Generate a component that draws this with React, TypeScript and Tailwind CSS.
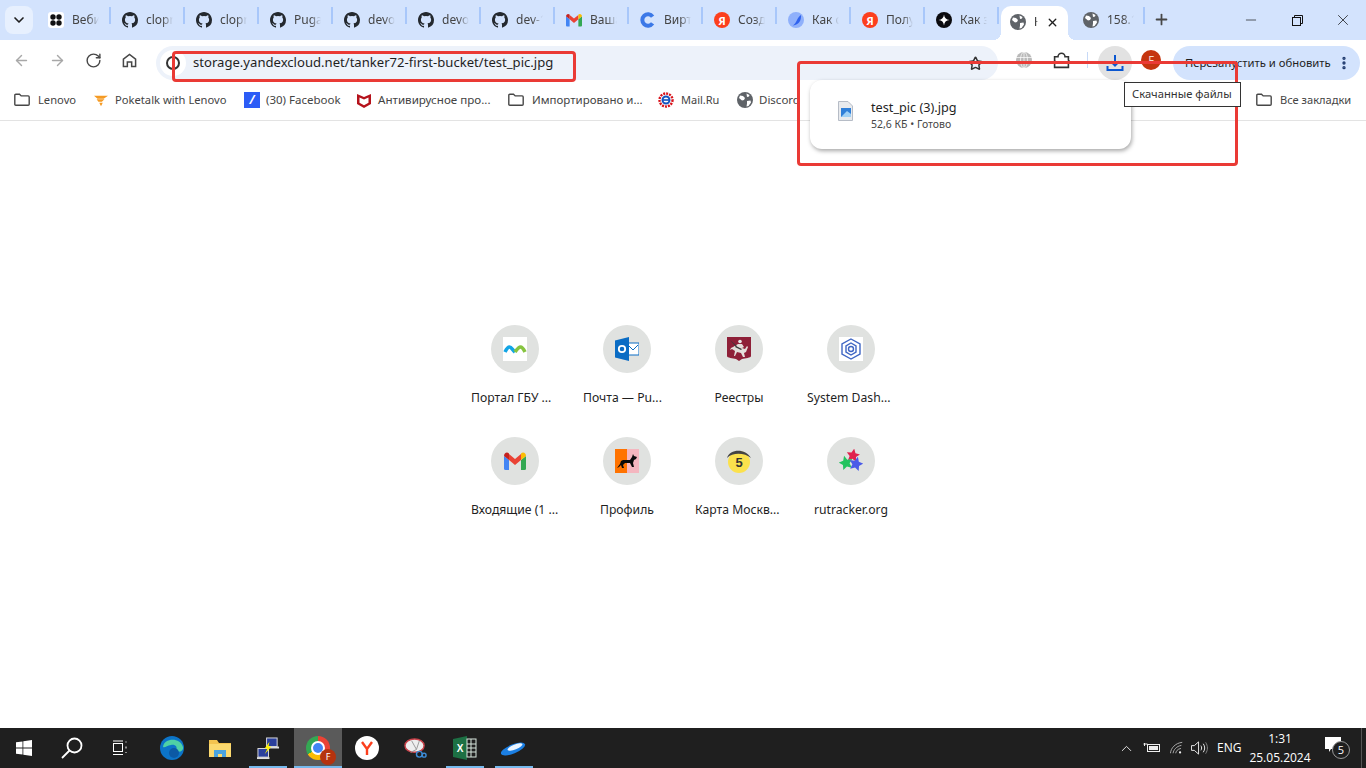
import React from 'react';
import {
  ArrowLeft, ArrowRight, RotateCw, Star, Plus, X, Minus, ChevronDown, ChevronUp, MoreVertical,
} from 'lucide-react';

const starPoints = (cx: number, cy: number, R: number, r: number, rot: number) =>
  Array.from({ length: 10 }, (_, i) => {
    const a = ((rot + i * 36 - 90) * Math.PI) / 180;
    const d = i % 2 === 0 ? R : r;
    return `${(cx + d * Math.cos(a)).toFixed(2)},${(cy + d * Math.sin(a)).toFixed(2)}`;
  }).join(' ');

const Github = () => (
  <svg viewBox="0 0 16 16" className="w-4 h-4 shrink-0" fill="#24292f">
    <path d="M8 0C3.58 0 0 3.58 0 8c0 3.54 2.29 6.53 5.47 7.59.4.07.55-.17.55-.38v-1.34c-2.23.48-2.69-1.07-2.69-1.07-.36-.93-.89-1.17-.89-1.17-.73-.5.05-.49.05-.49.8.06 1.23.82 1.23.82.71 1.22 1.87.87 2.33.66.07-.52.28-.87.51-1.07-1.78-.2-3.64-.89-3.64-3.95 0-.87.31-1.59.82-2.15-.08-.2-.36-1.02.08-2.12 0 0 .67-.21 2.2.82a7.6 7.6 0 0 1 4 0c1.53-1.04 2.2-.82 2.2-.82.44 1.1.16 1.92.08 2.12.51.56.82 1.27.82 2.15 0 3.07-1.87 3.75-3.65 3.95.29.25.54.73.54 1.48v2.2c0 .21.15.46.55.38A8 8 0 0 0 16 8c0-4.42-3.58-8-8-8z" />
  </svg>
);

const Globe = ({ color = '#5f6368' }: { color?: string }) => (
  <svg viewBox="0 0 16 16" className="w-4 h-4 shrink-0">
    <circle cx="8" cy="8" r="8" fill={color} />
    <path d="M3 3.5l3 .5 2 2-1 2-2 .5-3-2.5zM10 9l3.5-.5.5 2-2.5 3.5-2 .5.5-3zM9.5 1.5l3 1.5-.5 1.5-2 .5z" fill="#fff" />
  </svg>
);

const Dots = () => (
  <svg viewBox="0 0 16 16" className="w-4 h-4 shrink-0">
    <rect width="16" height="16" rx="3" fill="#fff" />
    <circle cx="5" cy="5" r="2.7" fill="#111" />
    <circle cx="11" cy="5" r="2.7" fill="#111" />
    <circle cx="5" cy="11" r="2.7" fill="#111" />
    <circle cx="11" cy="11" r="2.7" fill="#111" />
  </svg>
);

const Gmail = ({ size = 'w-4 h-4' }: { size?: string }) => (
  <svg viewBox="0 0 22 18" className={`${size} shrink-0`}>
    <path d="M0 4v12.5A1.5 1.5 0 0 0 1.5 18H5V8z" fill="#4285f4" />
    <path d="M22 4v12.5a1.5 1.5 0 0 1-1.5 1.5H17V8z" fill="#34a853" />
    <path d="M5 8V2L11 7l6-5v6l-6 5z" fill="#ea4335" />
    <path d="M0 4c0-3 3-4.5 5-2.5V8z" fill="#c5221f" />
    <path d="M22 4c0-3-3-4.5-5-2.5V8z" fill="#fbbc04" />
  </svg>
);

const Cloud = () => (
  <svg viewBox="0 0 16 16" className="w-4 h-4 shrink-0" fill="none" stroke="#3b78e7" strokeWidth="4">
    <path d="M12.6 4.6A5.7 5.7 0 1 0 12.6 11.4" />
  </svg>
);

const Yandex = () => (
  <div className="w-4 h-4 shrink-0 rounded-full bg-[#fc3f1d] flex items-center justify-center text-white text-[11px] font-bold leading-none">
    Я
  </div>
);

const Comet = () => (
  <svg viewBox="0 0 16 16" className="w-4 h-4 shrink-0">
    <circle cx="8" cy="8" r="8" fill="#8fb0fb" />
    <path d="M13 3c.5 5-2 10-8 10.5C7 12 8 10 9 8c1-2 2-4 4-5z" fill="#2f62ee" />
  </svg>
);

const Spark = () => (
  <svg viewBox="0 0 16 16" className="w-4 h-4 shrink-0">
    <circle cx="8" cy="8" r="8" fill="#0b0b0f" />
    <path d="M8 2.5c.4 3.4 2 5.1 5.5 5.5-3.5.4-5.1 2.1-5.5 5.5-.4-3.4-2-5.1-5.5-5.5 3.5-.4 5.1-2.1 5.5-5.5z" fill="#fff" />
  </svg>
);

const FolderIcon = () => (
  <svg viewBox="0 0 16 16" className="w-4 h-4 shrink-0" fill="none" stroke="#474747" strokeWidth="1.4">
    <path d="M.8 3.2c0-.6.4-1 1-1h3.7l1.7 1.7h7c.6 0 1 .4 1 1v7.3c0 .6-.4 1-1 1H1.8c-.6 0-1-.4-1-1z" />
  </svg>
);

const Tab = ({ icon, title }: { icon: React.ReactNode; title: string }) => (
  <div className="relative w-[74px] h-[32px] shrink-0 flex items-center pl-[11px] gap-[8px] border-r-2 border-[#a8c7fa] [border-image:linear-gradient(#d3e3fd_4px,#a8c7fa_4px,#a8c7fa_20px,#d3e3fd_20px)_1]">
    {icon}
    <span className="w-[27px] overflow-hidden whitespace-nowrap text-[12px] text-[#444] [mask-image:linear-gradient(90deg,#000_60%,transparent)]">
      {title}
    </span>
  </div>
);

const tabs: { icon: React.ReactNode; title: string }[] = [
  { icon: <Dots />, title: 'Веби' },
  { icon: <Github />, title: 'clopro' },
  { icon: <Github />, title: 'clopro' },
  { icon: <Github />, title: 'Pugach' },
  { icon: <Github />, title: 'devops' },
  { icon: <Github />, title: 'devops' },
  { icon: <Github />, title: 'dev-1' },
  { icon: <Gmail />, title: 'Ваша' },
  { icon: <Cloud />, title: 'Вирту' },
  { icon: <Yandex />, title: 'Созда' },
  { icon: <Comet />, title: 'Как с' },
  { icon: <Yandex />, title: 'Полу' },
  { icon: <Spark />, title: 'Как з' },
];

const Bookmark = ({ icon, label, width, gap, size }: { icon: React.ReactNode; label: string; width: string; gap: string; size: string }) => (
  <div className={`flex items-center shrink-0 ${gap}`}>
    {icon}
    <span className={`${width} ${size} whitespace-nowrap text-[#444]`}>{label}</span>
  </div>
);

const Tile = ({ icon, label }: { icon: React.ReactNode; label: string }) => (
  <div className="w-[112px] h-[112px] flex flex-col items-center">
    <div className="w-[48px] h-[48px] rounded-full bg-[#e0e2e0] flex items-center justify-center">
      <div className="w-6 h-6 flex items-center justify-center overflow-hidden">{icon}</div>
    </div>
    <span className={`mt-[16px] w-[88px] whitespace-nowrap text-[12.2px] leading-[17px] text-[#1f1f1f] ${label.endsWith('...') ? 'text-left' : 'text-center'}`}>
      {label}
    </span>
  </div>
);

const tiles: { icon: React.ReactNode; label: string }[] = [
  {
    label: 'Портал ГБУ ...',
    icon: (
      <svg viewBox="0 0 24 24" className="w-6 h-6">
        <rect width="24" height="24" fill="#fff" />
        <path d="M2 15c1.500-3 2.500-5 4.500-5s3 3 5.500 5" fill="none" stroke="#12a5e5" strokeWidth="3.6" />
        <path d="M12 15c1.500-2 3.500-5 5.500-5s3 2 4.500 5" fill="none" stroke="#86c440" strokeWidth="3.6" />
      </svg>
    ),
  },
  {
    label: 'Почта — Pu...',
    icon: (
      <svg viewBox="0 0 24 24" className="w-6 h-6">
        <rect x="11" y="6" width="13" height="12" fill="#fff" stroke="#0a6cc4" />
        <path d="M13 8l5 5 5-5" fill="none" stroke="#0a6cc4" />
        <path d="M0 3.5L14 0v24L0 20.5z" fill="#0a6cc4" />
        <circle cx="7" cy="12" r="3.2" fill="none" stroke="#fff" strokeWidth="1.8" />
      </svg>
    ),
  },
  {
    label: 'Реестры',
    icon: (
      <svg viewBox="0 0 24 24" className="w-6 h-6">
        <path d="M0 0h24v19c0 2-6 2-9 3l-3 2-3-2c-3-1-9-1-9-3z" fill="#8e2038" />
        <circle cx="13" cy="4.500" r="1.800" fill="#e8e8e8" />
        <path d="M6 10l5-3h4l2 3-2 1 3 1 2-3 1 1-2 5-2 1 1 4h-2l-2-4-4-1-2 4H7l1-5-3-2-2 1 1-2z" fill="#e4dfdb" />
        <path d="M9 9l6 3-1 1-6-3zM3 3l7 6-1 1z" fill="#3b3b3b" />
      </svg>
    ),
  },
  {
    label: 'System Dash...',
    icon: (
      <svg viewBox="0 0 24 24" className="w-6 h-6" fill="none" stroke="#3f66c4">
        <rect width="24" height="24" fill="#fff" stroke="none" />
        <path d="M12 2l9 5v10l-9 5-9-5V7z" strokeWidth="1.4" />
        <path d="M12 6l5 3v6l-5 3-5-3V9z" strokeWidth="1.4" />
        <circle cx="12" cy="12" r="2.5" strokeWidth="1.4" />
      </svg>
    ),
  },
  { label: 'Входящие (1 ...', icon: <Gmail size="w-[22px] h-[18px]" /> },
  {
    label: 'Профиль',
    icon: (
      <svg viewBox="0 0 24 24" className="w-6 h-6">
        <rect width="12" height="24" fill="#ff7300" />
        <rect x="12" width="12" height="24" fill="#f4b6bf" />
        <path d="M2 19l3-4 1-3 2-1h7l2-3 1-3 1 2 3 1-1 2-2 1-1 3 1 4h-2l-2-4h-5l-2 2 1 3H7l-1-3-2 2z" fill="#0a0a0a" />
      </svg>
    ),
  },
  {
    label: 'Карта Москв...',
    icon: (
      <svg viewBox="0 0 24 24" className="w-6 h-6">
        <circle cx="12" cy="13" r="11" fill="#fbe14c" />
        <path d="M0 9C3 0 18-1 24 9 18 4 6 3 0 9z" fill="#444" />
        <text x="12" y="18" textAnchor="middle" fontSize="13" fontWeight="700" fontFamily="'Liberation Sans', sans-serif" fill="#333">5</text>
      </svg>
    ),
  },
  {
    label: 'rutracker.org',
    icon: (
      <svg viewBox="0 0 24 24" className="w-6 h-6">
        <polygon points={starPoints(14, 6.5, 7, 3.4, 10)} fill="#e0234e" />
        <polygon points={starPoints(7, 14, 7.5, 3.6, -15)} fill="#22c35e" />
        <polygon points={starPoints(17, 15, 7.5, 3.6, 15)} fill="#4a5be8" />
      </svg>
    ),
  },
];

const TaskIcon = ({ children, active, open, className = '' }: { children: React.ReactNode; active?: boolean; open?: boolean; className?: string }) => (
  <div className={`relative w-[48px] h-[40px] shrink-0 flex items-center justify-center ${active ? 'bg-[#5a5a5a]' : ''} ${className}`}>
    {children}
    {open && <div className={`absolute bottom-0 h-[2px] bg-[#76b9ed] ${active ? 'left-0 right-0' : 'left-[5px] right-[5px]'}`} />}
  </div>
);

export default function App() {
  return (
    <div className="relative w-[1366px] h-[768px] overflow-hidden flex flex-col bg-white font-['Noto_Sans','Open_Sans',sans-serif]">
      {/* tab strip */}
      <div className="h-[40px] bg-[#d3e3fd] flex items-end shrink-0">
        <div className="w-[37px] h-[40px] shrink-0 flex items-center justify-center">
          <div className="w-7 h-7 mt-[-1px] rounded-lg bg-[#e7f0fe] flex items-center justify-center">
            <ChevronDown size={16} strokeWidth={2.5} color="#1f1f1f" />
          </div>
        </div>
        <div className="flex h-[40px] items-start pt-[4px]">
          {tabs.map((t, i) => (
            <Tab key={i} icon={t.icon} title={t.title} />
          ))}
        </div>
        <div className="relative ml-[2px] w-[67px] h-[34px] shrink-0 bg-white rounded-t-[10px] flex items-center pl-[9px] gap-[8px] pb-[2px]">
          <div className="absolute right-full bottom-0 w-[8px] h-[8px] bg-[radial-gradient(circle_at_0_0,transparent_8px,#fff_8px)]" />
          <div className="absolute left-full bottom-0 w-[8px] h-[8px] bg-[radial-gradient(circle_at_100%_0,transparent_8px,#fff_8px)]" />
          <Globe />
          <span className="w-[4px] overflow-hidden text-[12px] text-[#1f1f1f] [mask-image:linear-gradient(90deg,#000_40%,transparent)]">Н</span>
          <X size={13} strokeWidth={2.5} color="#1f1f1f" />
        </div>
        <div className="flex h-[40px] items-start pt-[4px]">
          <div className="w-[77px] h-[32px] shrink-0 flex items-center pl-[15px] gap-[8px] border-r-2 border-[#a8c7fa] [border-image:linear-gradient(#d3e3fd_4px,#a8c7fa_4px,#a8c7fa_20px,#d3e3fd_20px)_1]">
            <Globe />
            <span className="w-[27px] overflow-hidden whitespace-nowrap text-[12px] text-[#444] [mask-image:linear-gradient(90deg,#000_60%,transparent)]">158.160</span>
          </div>
          <Plus size={17} strokeWidth={2.5} color="#474747" className="ml-[8px] mt-[7px]" />
        </div>
        <div className="ml-auto flex h-[40px]">
          <div className="w-[46px] flex items-center justify-center"><Minus size={16} strokeWidth={1} color="#111" /></div>
          <div className="w-[46px] flex items-center justify-center">
            <svg viewBox="0 0 11 11" className="w-[11px] h-[11px]" fill="none" stroke="#111">
              <rect x=".5" y="2.5" width="8" height="8" />
              <path d="M2.5 2.5V.5h8v8h-2" />
            </svg>
          </div>
          <div className="w-[46px] flex items-center justify-center"><X size={18} strokeWidth={1} color="#111" /></div>
        </div>
      </div>

      {/* toolbar */}
      <div className="relative z-10 h-[40px] bg-white rounded-t-[8px] shrink-0 flex items-center pl-[13px]">
        <ArrowLeft size={17} color="#a8a8a8" strokeWidth={2} />
        <ArrowRight size={17} color="#a8a8a8" strokeWidth={2} className="ml-[19px]" />
        <RotateCw size={17} color="#474747" strokeWidth={2} className="ml-[19px]" />
        <svg viewBox="0 0 16 16" className="w-[15px] h-[15px] ml-[20px]" fill="none" stroke="#474747" strokeWidth="1.6">
          <path d="M1.5 14.5V6.5L8 1.5l6.5 5v8h-4.200V9.500H5.700v5z" />
        </svg>
        <div className="ml-[19px] w-[842px] h-[34px] mt-[6px] rounded-full bg-[#edf2fa] flex items-center pl-[4px]">
          <div className="w-[26px] h-[26px] rounded-full bg-white flex items-center justify-center">
            <div className="w-[14px] h-[14px] rounded-full border-2 border-[#333]" />
          </div>
          <span className="ml-[7px] text-[13.1px] text-[#1f1f1f] whitespace-nowrap">storage.yandexcloud.net/tanker72-first-bucket/test_pic.jpg</span>
          <Star size={15} strokeWidth={2.4} color="#333" className="ml-auto mr-[15px]" />
        </div>
        <svg viewBox="0 0 16 16" className="w-[16px] h-[16px] ml-[18px] mt-[-1px]" fill="#b9b9b9" stroke="#fff" strokeWidth=".7">
          <circle cx="8" cy="8" r="8" stroke="none" />
          <ellipse cx="8" cy="8" rx="3.5" ry="8" fill="none" />
          <path d="M0 5.5h16M0 10.5h16M8 0v16" />
        </svg>
        <svg viewBox="0 0 16 16" className="w-[17px] h-[17px] ml-[21px]" fill="none" stroke="#333" strokeWidth="1.5">
          <path d="M1.5 4.5h3.200a3.300 3.300 0 0 1 6.600 0h3.200v3.200a2.300 2.300 0 0 1 0 3.600v3.200H1.500v-3.400a2 2 0 0 0 0-3z" />
        </svg>
        <div className="ml-[17px] w-px h-[16px] bg-[#c7d9f7]" />
        <div className="ml-[10px] w-[34px] h-[34px] mt-[6px] rounded-full bg-[#e2e2e2] flex items-center justify-center">
          <svg viewBox="0 0 18 18" className="w-[18px] h-[18px]" fill="none" stroke="#0b57d0" strokeWidth="2">
            <path d="M9 1v10M5 7.5L9 11.5l4-4" />
            <path d="M1.5 12v4h15v-4" />
          </svg>
        </div>
        <div className="ml-[9px] w-5 h-5 rounded-full bg-[#c5350f] flex items-center justify-center text-[11px] text-[#f5d9cf]">F</div>
        <div className="ml-[12px] w-[187px] h-[34px] mt-[6px] rounded-full bg-[#d3e3fd] flex items-center pl-[12px]">
          <span className="w-[146px] text-[11.3px] text-[#1f1f1f] whitespace-nowrap">Перезапустить и обновить</span>
          <MoreVertical size={16} strokeWidth={3} color="#1f3a6e" className="ml-[5px]" />
        </div>
      </div>

      {/* bookmarks */}
      <div className="h-[41px] bg-white border-b border-[#e3e3e3] shrink-0 flex items-center pl-[14px] gap-[17px]">
        <Bookmark gap="gap-[8px]" width="w-[39px]" size="text-[11.2px]" icon={<FolderIcon />} label="Lenovo" />
        <Bookmark
          gap="gap-[7px]"
          width="w-[112px]"
          size="text-[11.2px]"
          label="Poketalk with Lenovo"
          icon={
            <svg viewBox="0 0 16 16" className="w-[14px] h-[14px]" fill="#f59a23">
              <path d="M0 3h16l-5 3.5H4zM3 7h9l-3 3H5zM6 11h4l-2 4z" />
            </svg>
          }
        />
        <Bookmark
          gap="gap-[6px]"
          width="w-[73px]"
          size="text-[11.5px]"
          label="(30) Facebook"
          icon={
            <div className="w-4 h-4 bg-[#2c5cf6] flex items-center justify-center text-white text-[12px] italic font-bold leading-none">/</div>
          }
        />
        <Bookmark
          gap="gap-[6px]"
          width="w-[113px]"
          size="text-[11.6px]"
          label="Антивирусное про..."
          icon={
            <svg viewBox="0 0 16 16" className="w-4 h-4" fill="#b5121b">
              <path d="M1 2l7 3 7-3v10l-7 4-7-4zM3.5 5.5v5.300L8 13.300l4.500-2.500V5.500L8 7.500z" />
            </svg>
          }
        />
        <Bookmark gap="gap-[8px]" width="w-[109px]" size="text-[11.5px]" icon={<FolderIcon />} label="Импортировано и..." />
        <Bookmark
          gap="gap-[7px]"
          width="w-[39px]"
          size="text-[11px]"
          label="Mail.Ru"
          icon={
            <svg viewBox="0 0 16 16" className="w-4 h-4">
              <circle cx="8" cy="8" r="6.5" fill="none" stroke="#d8131b" strokeWidth="2.4" strokeDasharray="2 1" />
              <circle cx="8" cy="8" r="3.5" fill="none" stroke="#1554c0" strokeWidth="2" />
              <rect x="4" y="7.2" width="8" height="1.6" fill="#1554c0" />
            </svg>
          }
        />
        <Bookmark gap="gap-[6px]" width="w-[40px]" size="text-[11.5px]" icon={<Globe />} label="Discord" />
        <div className="ml-auto mr-[15px]">
          <Bookmark gap="gap-[8px]" width="w-[71px]" size="text-[11.1px]" icon={<FolderIcon />} label="Все закладки" />
        </div>
      </div>

      {/* new tab page */}
      <div className="flex-1 bg-white pt-[204px]">
        <div className="w-[448px] ml-[459px] grid grid-cols-4">
          {tiles.map((t, i) => (
            <Tile key={i} icon={t.icon} label={t.label} />
          ))}
        </div>
      </div>

      {/* taskbar */}
      <div className="h-[40px] shrink-0 bg-[#1f1f1f] flex items-center">
        <TaskIcon>
          <svg viewBox="0 0 16 16" className="w-4 h-4" fill="#fff">
            <path d="M0 2.3l6.500-.9v6.200H0zM7.300 1.300L16 0v7.600H7.300zM0 8.400h6.500v6.200L0 13.700zM7.300 8.400H16V16l-8.700-1.200z" />
          </svg>
        </TaskIcon>
        <TaskIcon>
          <svg viewBox="0 0 22 22" className="w-[22px] h-[22px]" fill="none" stroke="#fff" strokeWidth="1.8">
            <circle cx="13.5" cy="8.5" r="7" />
            <path d="M8.5 13.5L1 21" />
          </svg>
        </TaskIcon>
        <TaskIcon>
          <svg viewBox="0 0 16 16" className="w-4 h-4" fill="none" stroke="#fff">
            <rect x="1.5" y="3.5" width="9" height="8" />
            <path d="M1 1h10M1 14.500h10M14 1.500v1M14 6.500v2M14 12v1" />
          </svg>
        </TaskIcon>
        <TaskIcon className="ml-[4px]">
          <svg viewBox="0 0 24 24" className="w-6 h-6">
            <circle cx="12" cy="12" r="12" fill="#0c74c8" />
            <path d="M3 11C4 2 20 1 23 11c1 5-6 6-7 3 2-3-1-6-5-5-4 .5-6 3-8 2z" fill="#4fd1a5" />
            <circle cx="14" cy="17" r="5" fill="#0c59a4" />
          </svg>
        </TaskIcon>
        <TaskIcon>
          <svg viewBox="0 0 22 18" className="w-[22px] h-[18px]">
            <path d="M0 1h8l2 3h12v14H0z" fill="#f3c34f" />
            <path d="M0 5h22v13H0z" fill="#fbd96f" />
            <path d="M5 11h12v7h-4v-3H9v3H5z" fill="#4aa3e0" />
          </svg>
        </TaskIcon>
        <TaskIcon open>
          <svg viewBox="0 0 24 24" className="w-[23px] h-[23px]">
            <rect x="10" y="1" width="11" height="9" fill="#2a3f9c" stroke="#ddd" />
            <rect x="1" y="12" width="11" height="9" fill="#2a3f9c" stroke="#ddd" />
            <rect x="0" y="21" width="13" height="2" fill="#ddd" />
            <rect x="10" y="10" width="13" height="2" fill="#ddd" />
            <path d="M13 5L8 12h3l-3 6 7-8h-3z" fill="#fff200" />
          </svg>
        </TaskIcon>
        <TaskIcon active open className="ml-[2px]">
          <div className="relative w-6 h-6 rounded-full bg-[conic-gradient(#ea4335_0_33%,#fbbc04_33%_66%,#34a853_66%)] flex items-center justify-center">
            <div className="w-[10px] h-[10px] rounded-full bg-[#4285f4] border-2 border-white box-content" />
            <div className="absolute right-[-6px] bottom-[-5px] w-[16px] h-[16px] rounded-full bg-[#b5330f] text-white text-[9px] flex items-center justify-center">F</div>
          </div>
        </TaskIcon>
        <TaskIcon className="ml-[1px]">
          <div className="w-6 h-6 rounded-full bg-white flex items-center justify-center">
            <svg viewBox="0 0 16 16" className="w-4 h-4" fill="none" stroke="#fc3f1d" strokeWidth="2.4">
              <path d="M3 2l5 7 5-7M8 9v6" />
            </svg>
          </div>
        </TaskIcon>
        <TaskIcon>
          <svg viewBox="0 0 24 24" className="w-[23px] h-[23px]">
            <ellipse cx="11" cy="9" rx="10" ry="7" fill="#eee" stroke="#c9434b" strokeWidth="1.5" />
            <path d="M8 4l5 9 3-9M13 13l-6 3" fill="none" stroke="#999" />
            <circle cx="16" cy="18" r="3" fill="none" stroke="#3c8cd8" strokeWidth="1.5" />
            <circle cx="21" cy="19" r="2" fill="none" stroke="#3c8cd8" strokeWidth="1.5" />
          </svg>
        </TaskIcon>
        <TaskIcon open className="ml-[2px]">
          <svg viewBox="0 0 24 24" className="w-6 h-6">
            <path d="M0 3l14-3v24L0 21z" fill="#1d7044" />
            <rect x="14" y="3" width="9" height="18" fill="none" stroke="#d9e8df" />
            <path d="M14 8h9M14 12h9M14 16h9M18 3v18" stroke="#d9e8df" />
            <text x="7" y="16" textAnchor="middle" fontSize="10" fontWeight="700" fontFamily="'Liberation Sans', sans-serif" fill="#fff">X</text>
          </svg>
        </TaskIcon>
        <TaskIcon open className="ml-[1px]">
          <svg viewBox="0 0 26 16" className="w-[26px] h-[16px]">
            <ellipse cx="12" cy="9" rx="13" ry="4.5" transform="rotate(-22 12 9)" fill="#1b7fe3" />
            <ellipse cx="14" cy="7" rx="8" ry="2.5" transform="rotate(-22 14 7)" fill="#eaf4ff" />
          </svg>
        </TaskIcon>

        <div className="ml-auto flex items-center h-[40px] text-white font-['Open_Sans',sans-serif]">
          <ChevronUp size={17} strokeWidth={1.3} color="#eee" />
          <svg viewBox="0 0 18 10" className="w-[18px] h-[10px] ml-[8px]" fill="none" stroke="#eee">
            <rect x="4.5" y="1.5" width="12" height="7" />
            <rect x="6" y="3" width="9" height="4" fill="#eee" stroke="none" />
            <path d="M.5 1h4M1.5 0v3" />
          </svg>
          <svg viewBox="0 0 16 14" className="w-[14px] h-[14px] ml-[9px]" fill="none" stroke="#bbb">
            <path d="M.5 13C1 7 6 1.5 14 .5M3.5 13c.5-4 4-8 9.500-9M6.500 13c.3-2 2-5 6-5.500" />
            <circle cx="11.5" cy="12" r="1.3" fill="#eee" stroke="none" />
          </svg>
          <svg viewBox="0 0 18 14" className="w-[17px] h-[14px] ml-[7px]" fill="none" stroke="#eee">
            <path d="M.5 4.5h3L8 .5v13l-4.500-4h-3z" />
            <path d="M10.5 4.5c1 1.500 1 3.500 0 5M13 2.500c2 3 2 6 0 9" />
            <path d="M15.5 1c2.500 4 2.500 8 0 12" stroke="#888" />
          </svg>
          <span className="ml-[9px] w-[24px] text-[12px]">ENG</span>
          <div className="ml-[7px] w-[64px] flex flex-col items-center text-[12px] leading-[19px]">
            <span>1:31</span>
            <span className="whitespace-nowrap">25.05.2024</span>
          </div>
          <div className="relative ml-[13px] w-[25px] h-[24px]">
            <svg viewBox="0 0 16 16" className="w-4 h-4 absolute left-0 top-[1px]" fill="#fff">
              <path d="M0 0h16v12H6l-2 3v-3H0z" />
            </svg>
            <div className="absolute left-[7px] top-[5px] w-[18px] h-[18px] rounded-full bg-[#1f1f1f] border border-[#999] flex items-center justify-center text-[11px] text-white">5</div>
          </div>
          <div className="ml-[11px] mr-[4px] w-px h-[40px] bg-[#555]" />
        </div>
      </div>

      {/* download bubble */}
      <div className="absolute z-20 left-[810px] top-[80px] w-[321px] h-[69px] bg-white rounded-[12px] shadow-[1px_2px_4px_rgba(0,0,0,0.35)] flex items-start pl-[28px] pt-[21px]">
        <svg viewBox="0 0 15 20" className="w-[15px] h-[20px]">
          <path d="M.5.5h9.500l4.500 4.500v14.500H.5z" fill="#e8eaed" stroke="#b6bcc6" />
          <rect x="3" y="7" width="10" height="9" fill="#2f7fd8" />
          <path d="M3 16l6-6 4 3v3z" fill="#9fd0f5" />
        </svg>
        <div className="ml-[18px] flex flex-col mt-[-3px]">
          <span className="text-[12.7px] leading-[18px] text-[#1f1f1f]">test_pic (3).jpg</span>
          <span className="text-[10.5px] leading-[16px] text-[#474747]">52,6 КБ • Готово</span>
        </div>
      </div>

      {/* annotations */}
      <div className="absolute z-30 left-[172px] top-[51px] w-[404px] h-[31px] border-[3px] border-[#ea3a35] rounded-[4px]" />
      <div className="absolute z-30 left-[797px] top-[61px] w-[441px] h-[105px] border-[3px] border-[#ea3a35] rounded-[4px]" />

      {/* tooltip */}
      <div className="absolute z-40 left-[1124px] top-[82px] w-[117px] h-[25px] bg-white border border-[#333] flex items-center pl-[7px] text-[11.2px] text-[#333] whitespace-nowrap">
        Скачанные файлы
      </div>
    </div>
  );
}
